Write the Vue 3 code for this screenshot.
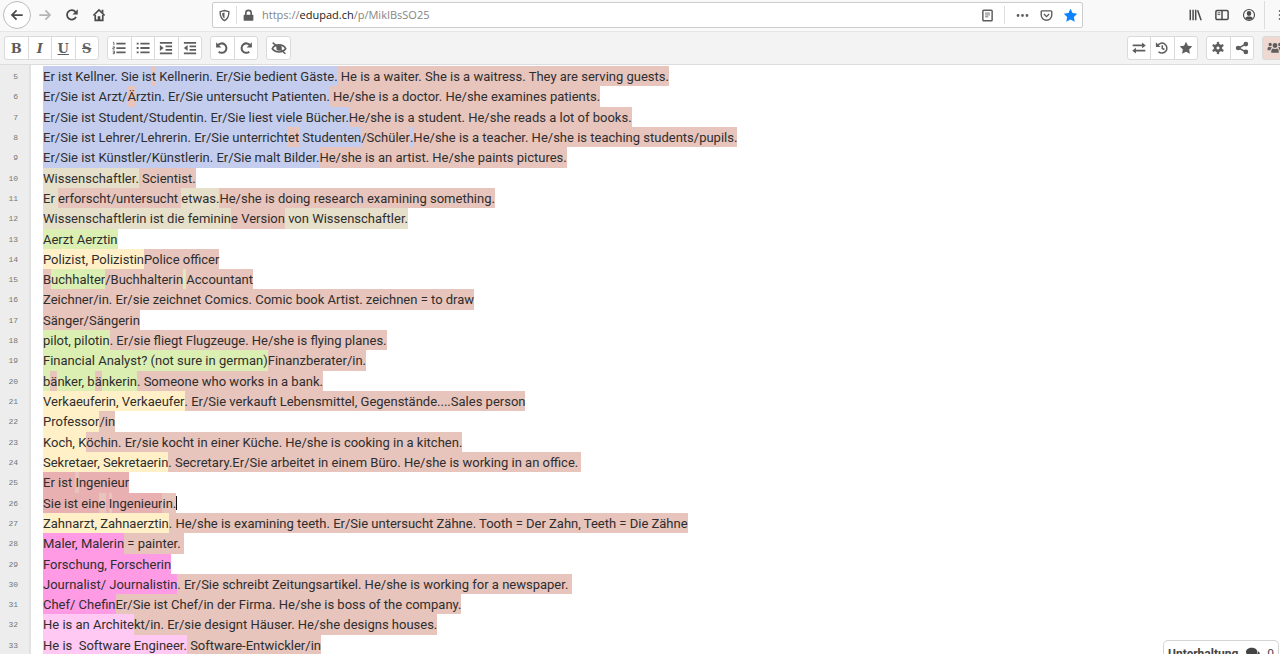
<script setup>
const icons = {
  back: { s: ['M14.5 8H2.5M7.5 2.8L2.3 8l5.2 5.2'], w: 2 },
  forward: { s: ['M1.5 8h12M8.5 2.8L13.7 8l-5.2 5.2'], w: 2 },
  reload: { s: ['M12.6 10.2A5.4 5.4 0 1 1 12 4.6'], f: ['M14.6 1.4v6h-6z'], w: 2 },
  home: { s: ['M1.6 8.6L8 2.2l6.4 6.4', 'M3.7 8v6.1h8.6V8'], f: ['M6.5 9.4h3V14h-3z', 'M11 2h2v4l-2-1.600z'], w: 1.9 },
  shield: { s: ['M8 1.800l5.400 1.500c0 5.400-1.200 8.900-5.400 10.900C3.800 12.200 2.600 8.700 2.600 3.300z'], f: ['M8 4.300v7.400C6 10.300 5.200 8.300 5 5.100z'], w: 1.7 },
  lock: { s: ['M4.700 8V5a3.300 3.300 0 0 1 6.600 0v3'], f: ['M3 7h10a1 1 0 0 1 1 1v5.500a1 1 0 0 1-1 1H3a1 1 0 0 1-1-1V8a1 1 0 0 1 1-1z'], w: 2 },
  reader: { s: ['M3.300 1.500h9.400a1 1 0 0 1 1 1v11a1 1 0 0 1-1 1H3.300a1 1 0 0 1-1-1v-11a1 1 0 0 1 1-1z'], t: ['M5 5h6M5 7.300h6M5 9.600h4'], w: 1.8 },
  dots: { f: ['M0.800 8a1.700 1.700 0 1 0 3.400 0a1.700 1.700 0 1 0-3.400 0', 'M6.300 8a1.700 1.700 0 1 0 3.400 0a1.700 1.700 0 1 0-3.400 0', 'M11.800 8a1.700 1.700 0 1 0 3.400 0a1.700 1.700 0 1 0-3.400 0'] },
  pocket: { s: ['M2.500 2.300h11a1 1 0 0 1 1 1v4a6.500 6.500 0 0 1-13 0v-4a1 1 0 0 1 1-1z', 'M4.800 6.300L8 9.400l3.200-3.100'], w: 1.7 },
  star: { f: ['M8 0.800l2.200 4.600 5 .700-3.600 3.500.900 5L8 12.200l-4.500 2.400.900-5L.800 6.100l5-.700z'] },
  library: { s: ['M2.600 2v12M5.800 2v12M8.800 2v12M11 2.500l4 11.500'], w: 1.7 },
  sidebar: { s: ['M2.400 2.800h11.200a1.400 1.400 0 0 1 1.400 1.400v7.600a1.400 1.400 0 0 1-1.400 1.400H2.400A1.400 1.400 0 0 1 1 11.800V4.200a1.400 1.400 0 0 1 1.400-1.400z', 'M8 3v10'], t: ['M3 5.500h3M3 7.500h3'], w: 1.7 },
  account: { s: ['M1.700 8a6.300 6.300 0 1 0 12.600 0a6.300 6.300 0 1 0-12.600 0'], f: ['M5.400 6.300a2.600 2.800 0 1 0 5.200 0a2.600 2.800 0 1 0-5.200 0', 'M3.600 11.800c.800-1.600 2-2.100 4.400-2.100s3.600.500 4.400 2.100c-1.600 2-7.200 2-8.800 0z'], w: 1.3 },
  menu: { s: ['M1 3.500h14M1 8h14M1 12.500h14'], w: 1.8 },
  ol: { s: ['M5 3h10.500M5 8h10.500M5 13h10.500'], t: ['M1 1.600h1.200v3.200M.800 6.700h2v1.300H1v1.300h2M.800 11.500h2v3h-2M1.200 13h1.500'], w: 2 },
  ul: { s: ['M5 3h10.500M5 8h10.500M5 13h10.500', 'M.800 3h2.200M.800 8h2.200M.800 13h2.200'], w: 2.1 },
  indent: { s: ['M1 2h14M7.500 6h7.500M7.500 10h7.500M1 14h14'], f: ['M1 4.700L5.300 8 1 11.300z'], w: 2 },
  outdent: { s: ['M1 2h14M7.500 6h7.500M7.500 10h7.500M1 14h14'], f: ['M5.300 4.700L1 8l4.300 3.300z'], w: 2 },
  undo: { s: ['M3.300 4.900A5.400 5.400 0 1 1 4.200 12.300'], f: ['M1.300 1.300v6h6z'], w: 2.3 },
  redo: { s: ['M12.700 4.900A5.400 5.400 0 1 0 11.800 12.300'], f: ['M14.700 1.300v6h-6z'], w: 2.3 },
  eye: { s: ['M.300 8.600C3.500 3 12.500 3 15.700 8.600C12.500 13.800 3.500 13.800.300 8.600z', 'M.800 1.800l14.500 12.800'], f: ['M5 8a3.100 3.100 0 1 0 6.200 0a3.100 3.100 0 1 0-6.200 0'], w: 1.8 },
  exchange: { s: ['M.800 5h11.500M15.200 11H3.700'], f: ['M11.500 1.800L15.700 5l-4.200 3.200z', 'M4.500 7.800L.300 11l4.200 3.200z'], w: 1.8 },
  history: { s: ['M3 5.200A5.700 5.700 0 1 1 4 12.300', 'M8.300 4.800v3.700l2.500 1.200'], f: ['M1 1.500v5.300h5.300z'], w: 1.7 },
  gear: { s: ['M4.700 8a3.300 3.300 0 1 0 6.600 0a3.300 3.300 0 1 0-6.600 0'], f: ['M6.700 1h2.600v3H6.700z', 'M6.700 12h2.600v3H6.700z', 'M1.300 5.600l1.300-2.200 2.700 1.500L4 7.200z', 'M10.700 11.100L12 8.800l2.700 1.600-1.300 2.200z', 'M14.700 5.600l-1.300-2.200-2.700 1.500L12 7.200z', 'M5.300 11.100L4 8.800l-2.700 1.600 1.300 2.200z'], w: 3 },
  share: { s: ['M12.300 3.500L4 8l8.300 4.500'], f: ['M9.700 3.500a2.700 2.700 0 1 0 5.400 0a2.700 2.700 0 1 0-5.400 0', 'M.900 8a2.700 2.700 0 1 0 5.400 0a2.700 2.700 0 1 0-5.400 0', 'M9.700 12.500a2.700 2.700 0 1 0 5.400 0a2.700 2.700 0 1 0-5.400 0'], w: 1.7 },
  users: { f: ['M5.200 5.200a2.800 2.800 0 1 0 5.600 0a2.800 2.800 0 1 0-5.600 0', 'M3.700 13.500c-.300-3.500.900-5 2.300-5 1.300.900 2.700.900 4 0 1.400 0 2.600 1.500 2.300 5z', 'M.600 4a1.900 1.900 0 1 0 3.800 0a1.900 1.900 0 1 0-3.800 0', 'M11.600 4a1.900 1.900 0 1 0 3.800 0a1.900 1.900 0 1 0-3.800 0', 'M-.500 10.500c-.300-2.500.500-4 1.600-4 1 .600 2.300.700 3.300.300.300 1-1.600 1.500-1.600 3.700z', 'M16.500 10.500c.300-2.500-.500-4-1.600-4-1 .600-2.300.700-3.300.300-.300 1 1.600 1.500 1.600 3.700z'] },
  chat: { f: ['M6.500 2C2.800 2 0 4 0 6.800c0 1.500.800 2.700 2 3.600L1 13c1.500-.200 2.800-.700 3.700-1.500 5 .500 8.300-1.700 8.300-4.700S10.200 2 6.500 2z', 'M13.700 6c0 3.500-3 6-7.200 6.500 1.500 1 3.500 1.300 5.300 1 1 .700 2.200 1 3.700 1.200l-1-2.200c2.200-2 1.800-5-.800-6.500z'] },
}

const formatGroups = [
  { size: 'quad', items: [
    { label: 'Bold', text: 'B', cls: 'bold' }, { label: 'Italic', text: 'I', cls: 'italic' },
    { label: 'Underline', text: 'U', cls: 'underline' }, { label: 'Strikethrough', text: 'S', cls: 'strike' } ] },
  { size: 'quad', items: [
    { label: 'Ordered list', icon: 'ol' }, { label: 'Unordered list', icon: 'ul' },
    { label: 'Indent', icon: 'indent' }, { label: 'Outdent', icon: 'outdent' } ] },
  { size: 'pair', items: [{ label: 'Undo', icon: 'undo' }, { label: 'Redo', icon: 'redo' }] },
  { size: 'single', items: [{ label: 'Clear authorship colors', icon: 'eye' }] },
]
const padGroups = [
  { size: 'trio', items: [
    { label: 'Import/Export', icon: 'exchange' }, { label: 'Timeslider', icon: 'history' },
    { label: 'Save revision', icon: 'star' } ] },
  { size: 'pair', items: [{ label: 'Settings', icon: 'gear' }, { label: 'Share', icon: 'share' }] },
  { size: 'users', items: [{ label: 'Users', icon: 'users' }] },
]
const toolbars = [{ name: 'Formatting', groups: formatGroups }, { name: 'Pad', groups: padGroups }]

// Each segment is [author, text].
const firstLine = 5
const lines = [
  [['blue', 'Er ist Kellner. Sie is'], ['salmon', 't'], ['blue', ' Kellnerin. Er/Sie bedient Gäste.'], ['salmon', ' He is a waiter. She is a waitress. They are serving guests.']],
  [['blue', 'Er/Sie ist Arzt/'], ['salmon', 'Ä'], ['blue', 'rztin. Er/Sie untersucht Patienten.'], ['salmon', ' He/she is a doctor. He/she examines patients.']],
  [['blue', 'Er/Sie ist Student/Studentin. Er/Sie liest viele Bücher.'], ['salmon', 'He/she is a student. He/she reads a lot of books.']],
  [['blue', 'Er/Sie ist Lehrer/Lehrerin. Er/Sie unterricht'], ['salmon', 'et'], ['blue', ' Studenten'], ['salmon', '/Schüler'], ['blue', '.'], ['salmon', 'He/she is a teacher. He/she is teaching students/pupils.']],
  [['blue', 'Er/Sie ist Künstler/Künstlerin. Er/Sie malt Bilder.'], ['salmon', 'He/she is an artist. He/she paints pictures.']],
  [['beige', 'Wissenschaftler.'], ['salmon', ' Scientist.']],
  [['beige', 'Er '], ['salmon', 'erforscht/untersucht '], ['beige', 'etwas.'], ['salmon', 'He/she is doing research examining something.']],
  [['beige', 'Wissenschaftlerin ist die feminin'], ['salmon', 'e Version'], ['beige', ' von Wissenschaftler.']],
  [['green', 'Aerzt Aerztin']],
  [['yellow', 'Polizist, Polizistin'], ['salmon', 'Police officer']],
  [['salmon', 'B'], ['green', 'uchhalter'], ['salmon', '/Buchhalterin'], ['green', ' '], ['salmon', 'Accountant']],
  [['salmon', 'Zeichner/in. Er/sie zeichnet Comics. Comic book Artist. zeichnen = to draw']],
  [['salmon', 'Sänger/Sängerin']],
  [['green', 'pilot, pilotin'], ['salmon', '. Er/sie fliegt Flugzeuge. He/she is flying planes.']],
  [['green', 'Financial Analyst? (not sure in german)'], ['salmon', 'Finanzberater/in.']],
  [['green', 'b'], ['salmon', 'ä'], ['green', 'nker, b'], ['salmon', 'ä'], ['green', 'nkerin'], ['salmon', '. Someone who works in a bank.']],
  [['yellow', 'Verkaeuferin, Verkaeufer'], ['salmon', '. Er/Sie verkauft Lebensmittel, Gegenstände....Sales person']],
  [['yellow', 'Professor'], ['salmon', '/in']],
  [['yellow', 'Koch, K'], ['salmon', 'öchin. Er/sie kocht in einer Küche. He/she is cooking in a kitchen.']],
  [['yellow', 'Sekretaer, Sekretaerin'], ['salmon', '. Secretary.Er/Sie arbeitet in einem Büro. He/she is working in an office. ']],
  [['rose', 'Er ist '], ['salmon', 'I'], ['rose', 'ngenieur']],
  [['rose', 'Sie ist ein'], ['salmon', 'e'], ['rose', ' '], ['salmon', 'I'], ['rose', 'ngenieur'], ['salmon', 'in.']],
  [['yellow', 'Zahnarzt, Zahnaerztin'], ['salmon', '. He/she is examining teeth. Er/Sie untersucht Zähne. Tooth = Der Zahn, Teeth = Die Zähne']],
  [['magenta', 'Maler, Malerin'], ['salmon', ' = painter. ']],
  [['magenta', 'Forschung, Forscherin']],
  [['magenta', 'Journalist/ Journalistin'], ['salmon', '. Er/Sie schreibt Zeitungsartikel. He/she is working for a newspaper. ']],
  [['magenta', 'Chef/ Chefin'], ['salmon', 'Er/Sie ist Chef/in der Firma. He/she is boss of the company.']],
  [['pink', 'He is an Archite'], ['salmon', 'kt/in. Er/sie designt Häuser. He/she designs houses.']],
  [['pink', 'He is  Software Engineer.'], ['salmon', ' Software-Entwickler/in']],
]
const caretLine = 26

const Icon = (props) => {
  const d = icons[props.name]
  return h('svg', { viewBox: '0 0 16 16', class: 'icon', 'aria-hidden': 'true' }, [
    ...(d.s || []).map((p) => h('path', { d: p, fill: 'none', stroke: 'currentColor', 'stroke-width': d.w })),
    ...(d.t || []).map((p) => h('path', { d: p, fill: 'none', stroke: 'currentColor', 'stroke-width': 1 })),
    ...(d.f || []).map((p) => h('path', { d: p, fill: 'currentColor' })),
  ])
}
Icon.props = ['name']
</script>

<script>
import { h } from 'vue'
</script>

<template>
  <div class="window">
    <nav class="browser" aria-label="Browser">
      <div class="nav-left">
        <button class="nav-btn back" aria-label="Back"><Icon name="back" /></button>
        <button class="nav-btn muted" aria-label="Forward"><Icon name="forward" /></button>
        <button class="nav-btn" aria-label="Reload"><Icon name="reload" /></button>
        <button class="nav-btn" aria-label="Home"><Icon name="home" /></button>
      </div>
      <div class="address">
        <button class="addr-btn" aria-label="Tracking protection"><Icon name="shield" /></button>
        <i class="rule"></i>
        <button class="addr-btn" aria-label="Connection security"><Icon name="lock" /></button>
        <div class="url" role="textbox" aria-label="Address" tabindex="0">https://<b>edupad.ch</b>/p/MikIBsSO25</div>
        <button class="addr-btn" aria-label="Reader view"><Icon name="reader" /></button>
        <i class="rule wide"></i>
        <button class="addr-btn" aria-label="Page actions"><Icon name="dots" /></button>
        <button class="addr-btn" aria-label="Save to Pocket"><Icon name="pocket" /></button>
        <button class="addr-btn starred" aria-label="Bookmark"><Icon name="star" /></button>
      </div>
      <div class="nav-right">
        <button class="nav-btn" aria-label="Library"><Icon name="library" /></button>
        <button class="nav-btn" aria-label="Sidebars"><Icon name="sidebar" /></button>
        <button class="nav-btn" aria-label="Account"><Icon name="account" /></button>
        <i class="rule tall"></i>
        <button class="nav-btn menu" aria-label="Menu"><Icon name="menu" /></button>
      </div>
    </nav>

    <header class="toolbar">
      <div v-for="bar in toolbars" :key="bar.name" class="groups" role="toolbar" :aria-label="bar.name">
        <div v-for="(group, g) in bar.groups" :key="g" class="group" :class="group.size">
          <button v-for="item in group.items" :key="item.label" :aria-label="item.label">
            <Icon v-if="item.icon" :name="item.icon" />
            <span v-else class="letter" :class="item.cls">{{ item.text }}</span>
          </button>
        </div>
      </div>
    </header>

    <main class="editor">
      <div v-for="(line, i) in lines" :key="i" class="line">
        <span class="number">{{ firstLine + i }}</span>
        <div class="text"><span v-for="([author, text], s) in line" :key="s" :class="author">{{ text }}</span><i v-if="firstLine + i === caretLine" class="caret"></i></div>
      </div>
    </main>

    <button class="chat">
      <strong>Unterhaltung</strong><Icon name="chat" /><span>0</span>
    </button>
  </div>
</template>

<style>
html, body { margin: 0; height: 100%; overflow: hidden; background: #fff; }
#app { height: 100%; }
</style>

<style scoped>
.window {
  display: flex;
  flex-direction: column;
  height: 100%;
  overflow: hidden;
  font-family: Roboto, "Liberation Sans", sans-serif;
  color: #2e2e2e;
}
button {
  display: flex;
  align-items: center;
  justify-content: center;
  padding: 0;
  border: 0;
  background: none;
  color: inherit;
  font: inherit;
}
:deep(.icon) { display: block; flex: none; width: 14px; height: 14px; overflow: visible; }

.browser {
  display: flex;
  flex: none;
  height: 31px;
  border-bottom: 1px solid #e6e6e6;
  background: #f9f9f9;
  color: #4a4a4a;
}
.nav-left { display: flex; flex: none; box-sizing: border-box; width: 212px; height: 29px; padding-left: 3px; align-items: center; }
.nav-btn { flex: none; width: 27px; height: 28px; }
.back { box-sizing: border-box; width: 28px; border: 1px solid #bbb; border-radius: 50%; background: #fff; }
.muted { color: #b5b5b5; }
.address {
  display: flex;
  flex: 1;
  align-items: center;
  box-sizing: border-box;
  height: 26px;
  margin-top: 2px;
  border: 1px solid #ccc;
  border-radius: 2px;
  background: #fff;
  color: #5c5c5c;
}
.addr-btn { width: 24px; height: 24px; }
.addr-btn:first-child, .rule + .addr-btn:nth-child(3) { width: 23px; }
.addr-btn :deep(.icon) { width: 13px; height: 13px; }
.addr-btn.starred { color: #0a84ff; }
.addr-btn.starred :deep(.icon) { width: 15px; height: 15px; }
.rule { flex: none; width: 1px; height: 18px; background: #ddd; }
.rule.wide { margin: 0 5px; }
.rule.tall { height: 28px; margin-left: 2px; }
.url {
  flex: 1;
  padding-left: 2px;
  font: 11px/20px "Open Sans", "Noto Sans", sans-serif;
  color: #858585;
  white-space: nowrap;
}
.url b { font-weight: 400; color: #1a1a1a; }
.nav-right { display: flex; flex: none; align-items: center; box-sizing: border-box; width: 197px; height: 29px; padding-left: 98px; }
.menu { margin-left: 6px; }

.toolbar {
  display: flex;
  flex: none;
  justify-content: space-between;
  height: 32px;
  border-bottom: 1px solid #dcdcde;
  background: #f3f3f3;
  color: #5e5e5e;
}
.groups { display: flex; align-items: center; gap: 8px; padding-left: 4px; }
.group {
  display: flex;
  box-sizing: border-box;
  height: 24px;
  border: 1px solid #dadada;
  border-radius: 3px;
  background: #fff;
}
.group button { flex: 1; }
.group button + button { border-left: 1px solid #dadada; }
.quad { width: 95px; }
.trio { width: 71px; }
.pair { width: 48px; }
.single { width: 25px; }
.users { width: 25px; margin-right: -7px; background: #efd8d2; }
.letter { padding-top: 1px; font: 700 13px/15px "DejaVu Serif", serif; }
.italic { font-style: italic; }
.underline { text-decoration: underline; }
.strike { text-decoration: line-through; }

.editor {
  flex: 1;
  min-height: 0;
  overflow: hidden;
  padding-top: 1px;
  background: linear-gradient(90deg, #ededed 29px, #e2e2e2 29px, #e2e2e2 31px, #fff 31px);
  font-size: 13px;
  line-height: 1.486;
}
.line { display: flex; }
.number {
  flex: none;
  box-sizing: border-box;
  width: 43px;
  height: 20px;
  padding-right: 25px;
  text-align: right;
  font-family: "Liberation Mono", monospace;
  font-size: 8px;
  line-height: 21px;
  color: #777;
}
.text { display: flex; white-space: pre; }
.text span { padding-top: 1px; }
.caret { width: 1px; margin: 3px 0; background: #111; }
.blue { background: #c4cdee; }
.salmon { background: #e7c4bc; }
.beige { background: #e6dfc9; }
.green { background: #dbefb3; }
.yellow { background: #fff0c8; }
.rose { background: #e8b0b1; }
.magenta { background: #ff9be5; }
.pink { background: #ffc9f3; }

.chat {
  position: fixed;
  right: 1px;
  bottom: 0;
  align-items: flex-start;
  box-sizing: border-box;
  width: 116px;
  height: 14px;
  padding: 5px 4px 0;
  overflow: hidden;
  border: 1px solid #d4d4d4;
  border-bottom: 0;
  border-radius: 5px 5px 0 0;
  background: #fff;
  font-size: 12px;
  line-height: 16px;
  color: #444;
  justify-content: space-between;
}
</style>
